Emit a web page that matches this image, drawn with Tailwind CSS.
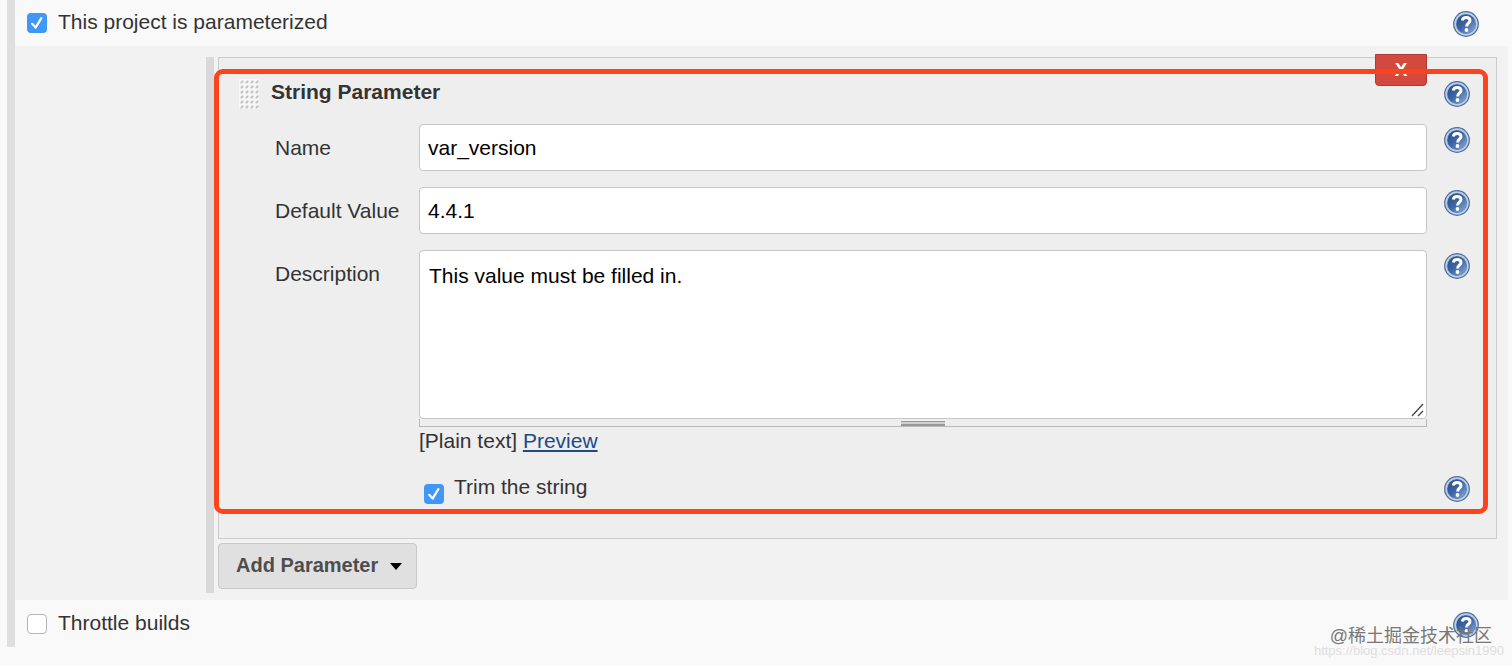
<!DOCTYPE html>
<html lang="en">
<head>
<meta charset="utf-8">
<meta name="viewport" content="width=device-width, initial-scale=1">
<title>Parameterized project</title>
<script src="https://cdn.jsdelivr.net/npm/@tailwindcss/browser@4"></script>
</head>
<body class="relative min-h-screen bg-[#f9f9f9] font-['Liberation_Sans',Arial,sans-serif] text-[21px] leading-7 text-[#333]">

<svg class="absolute size-0" aria-hidden="true">
  <defs>
    <linearGradient id="ball" x1="0" y1="0" x2="1" y2="1">
      <stop offset="0" stop-color="#234b8a"/>
      <stop offset="0.5" stop-color="#3f67a5"/>
      <stop offset="1" stop-color="#8fb0dc"/>
    </linearGradient>
    <symbol id="help" viewBox="0 0 26 26">
      <circle cx="13" cy="13" r="12.9" fill="#4a6c9c"/>
      <circle cx="13" cy="13" r="11.7" fill="#bccfe6"/>
      <circle cx="13" cy="13" r="10" fill="#5479ae"/>
      <circle cx="13" cy="13" r="9.4" fill="url(#ball)"/>
      <path d="M9.2 9.4C9.6 7.2 11.1 6.4 13.1 6.4c2.3 0 3.9 1.2 3.9 3.1 0 2.6-3.4 2.9-3.4 5.9" fill="none" stroke="#fff" stroke-width="3"/>
      <circle cx="13.5" cy="19" r="1.9" fill="#fff"/>
    </symbol>
    <pattern id="dots" width="5" height="5" patternUnits="userSpaceOnUse">
      <path d="M1.5 4.5V3L3 1.5H4.5V3L3 4.5Z" fill="#c2c2c2"/>
    </pattern>
  </defs>
</svg>

<main class="mr-1 ml-[7px] border-l-8 border-[#dfdfdf]">
  <div class="flex h-[46px] items-center pr-[29px] pl-3">
    <label class="flex flex-1 items-center gap-[11px]">
      <input type="checkbox" checked class="sr-only">
      <span class="flex size-5 items-center justify-center rounded-[4px] bg-[#3f97f8]">
        <svg class="size-5" viewBox="0 0 20 20" fill="none" stroke="#fff" stroke-width="2.2" stroke-linecap="round" stroke-linejoin="round"><path d="M5.2 10.8 8.6 14.6 14.4 5.2"/></svg>
      </span>
      <span class="pb-0.5">This project is parameterized</span>
    </label>
    <button type="button" aria-label="Help" class="mt-0.5 size-[26px]"><svg class="size-full"><use href="#help"/></svg></button>
  </div>

  <section class="bg-[#f2f2f2] pt-[11px] pr-[11px] pb-[7px] pl-[191px]">
    <div class="border-l-8 border-[#d9d9d9] pl-1">
      <div class="relative border border-[#cbcbcb] bg-[#eee] pt-[21px] pb-[34px]">
        <button type="button" aria-label="Delete parameter" class="absolute -top-1 right-[69px] h-8 w-[52px] rounded-b-[4px] border border-[#b03a33] bg-[#d2493f] text-[19px] leading-7 font-bold text-white">X</button>
        <div class="pointer-events-none absolute top-[11px] right-2 bottom-6 -left-[5px] rounded-[9px] border-5 border-[#fb431d]"></div>

        <div class="mb-[15px] flex h-[30px] items-center gap-3 pr-[26px] pl-5">
          <svg class="h-[30px] w-5 cursor-move bg-[#f7f7f7]"><rect width="20" height="30" fill="url(#dots)"/></svg>
          <h2 class="flex-1 pb-1 font-bold">String Parameter</h2>
          <button type="button" aria-label="Help for String Parameter" class="size-[26px]"><svg class="size-full"><use href="#help"/></svg></button>
        </div>

        <div class="grid grid-cols-[144px_1fr_43px] gap-y-4 pr-[26px] pl-14">
          <label for="name" class="self-center">Name</label>
          <input id="name" type="text" value="var_version" class="h-[47px] min-w-0 rounded-[4px] border border-[#c6c6c6] bg-white px-2 text-black">
          <button type="button" aria-label="Help for Name" class="mt-[3px] size-[26px] justify-self-end"><svg class="size-full"><use href="#help"/></svg></button>

          <label for="default" class="self-center">Default Value</label>
          <input id="default" type="text" value="4.4.1" class="h-[47px] min-w-0 rounded-[4px] border border-[#c6c6c6] bg-white px-2 text-black">
          <button type="button" aria-label="Help for Default Value" class="mt-[3px] size-[26px] justify-self-end"><svg class="size-full"><use href="#help"/></svg></button>

          <label for="description" class="mt-2.5">Description</label>
          <div>
            <div class="relative">
              <textarea id="description" class="block h-[169px] w-full resize-none rounded-[4px] border border-[#c6c6c6] bg-white px-[9px] py-[11px] text-black">This value must be filled in.</textarea>
              <svg class="absolute right-0.5 bottom-0.5 size-3.5" viewBox="0 0 14 14" stroke="#444" stroke-width="1.3"><path d="M1 13 12 1M7 13 12 8"/></svg>
            </div>
            <div class="flex h-2 items-end justify-center border border-t-0 border-[#b9b9b9]">
              <span class="h-[5px] w-11 border-t border-b-2 border-[#999] bg-[#d0d0d0]"></span>
            </div>
            <p>[Plain text] <a href="#preview" class="text-[#204a87] underline">Preview</a></p>
          </div>
          <button type="button" aria-label="Help for Description" class="mt-[3px] size-[26px] justify-self-end"><svg class="size-full"><use href="#help"/></svg></button>

          <label class="col-start-2 flex items-start gap-2.5 pt-0.5 pl-[5px]">
            <input type="checkbox" checked class="sr-only">
            <span class="mt-[11px] flex size-5 items-center justify-center rounded-[4px] bg-[#3f97f8]">
              <svg class="size-5" viewBox="0 0 20 20" fill="none" stroke="#fff" stroke-width="2.2" stroke-linecap="round" stroke-linejoin="round"><path d="M5.2 10.8 8.6 14.6 14.4 5.2"/></svg>
            </span>
            Trim the string
          </label>
          <button type="button" aria-label="Help for Trim the string" class="mt-[5px] size-[26px] justify-self-end"><svg class="size-full"><use href="#help"/></svg></button>
        </div>
      </div>

      <div class="pt-1 pb-1">
        <button type="button" class="flex h-[46px] w-[199px] items-center gap-3 rounded-[4px] border border-[#c8c8c8] bg-[#e0e0e0] pl-[17px] text-[20px] font-bold text-[#4d4d4d]">
          <span class="pb-0.5">Add Parameter</span>
          <svg class="h-[7px] w-3" viewBox="0 0 12 7"><path d="M0 0H12L6 7Z" fill="#000"/></svg>
        </button>
      </div>
    </div>
  </section>

  <div class="flex h-[47px] items-center pr-[29px] pl-3">
    <label class="flex flex-1 items-center gap-[11px]">
      <input type="checkbox" class="size-5 appearance-none rounded-[4px] border border-[#b5b5b5] bg-white">
      <span class="pb-0.5">Throttle builds</span>
    </label>
    <button type="button" aria-label="Help" class="mt-0.5 size-[26px]"><svg class="size-full"><use href="#help"/></svg></button>
  </div>
</main>

<p class="absolute top-[624px] right-5 font-['Liberation_Sans','Noto_Sans_CJK_SC',sans-serif] text-[18px] leading-6 text-[#777]">@稀土掘金技术社区</p>
<p class="absolute top-[643px] right-2 text-[13px] leading-4 text-[#dedede]">https://blog.csdn.net/leepsin1990</p>

</body>
</html>
